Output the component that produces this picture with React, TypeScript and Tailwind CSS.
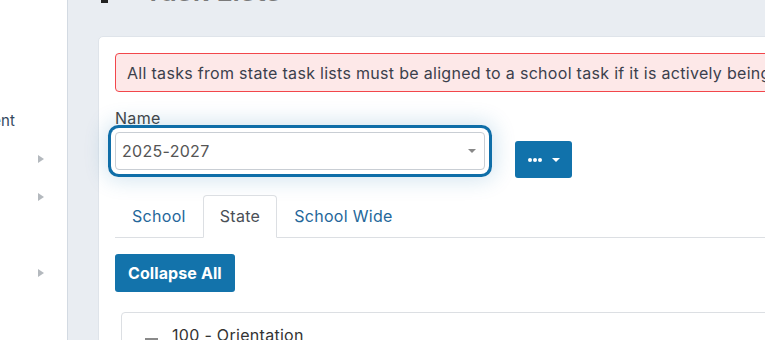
import type { ReactNode } from "react";

const font = "font-['Inter','Open_Sans',sans-serif]";

function SideArrow() {
  return (
    <svg width="6" height="8" viewBox="0 0 6 8" className="text-[#b4b9be]">
      <path d="M0 0 L6 4 L0 8 Z" fill="currentColor" />
    </svg>
  );
}

function SideRow({ children, arrow }: { children?: ReactNode; arrow?: boolean }) {
  return (
    <div className="h-[38px] flex items-center justify-end pr-[23px]">
      {children}
      {arrow && <SideArrow />}
    </div>
  );
}

function Caret({ className }: { className: string }) {
  return (
    <svg width="8" height="4" viewBox="0 0 8 4" className={className}>
      <path d="M0 0 H8 L4 4 Z" fill="currentColor" />
    </svg>
  );
}

export default function App() {
  return (
    <div className={`flex w-[765px] h-[340px] overflow-hidden tracking-[0.3px] ${font}`}>
      {/* Sidebar, scrolled so only the tail of its labels shows */}
      <aside className="w-[68px] shrink-0 bg-white border-r border-[#d3dae2] overflow-hidden pt-[102px]">
        <div className="h-[38px] flex items-center overflow-hidden">
          <span className="text-[15px] tracking-normal text-[#34495e] whitespace-nowrap ml-[-78px]">Management</span>
        </div>
        <SideRow arrow />
        <SideRow arrow />
        <SideRow />
        <SideRow arrow />
      </aside>

      <main className="flex-1 bg-[#e9edf2] pl-[30px] overflow-hidden">
        {/* Page title, scrolled mostly out of view */}
        <div className="-mt-[25px] h-[32px] flex items-start gap-[36px]">
          <span className="mt-[6px] w-[7px] h-[22px] bg-[#222] ml-[3px] shrink-0" />
          <span className="text-[28px] leading-[32px] font-semibold text-[#7a7a7a] whitespace-nowrap">
            Task Lists
          </span>
        </div>

        <div className="mt-[29px] w-[900px] h-[400px] bg-white border border-[#dfe4ea] rounded-[5px] p-[16px]">
          <div className="h-[39px] flex items-center px-[11px] bg-[#fde8e8] border border-[#f2464b] rounded-[4px] text-[16px] text-[#3b3f4c] whitespace-nowrap">
            All tasks from state task lists must be aligned to a school task if it is actively being used this year.
          </div>

          <div className="flex items-start mt-[16px]">
            <div className="flex flex-col">
              <label className="text-[16px] leading-[20px] text-[#444]">Name</label>
              <div className="mt-[4px] w-[370px] h-[38px] flex items-center justify-between pl-[6px] pr-[8px] bg-white border border-[#c9ced4] rounded-[4px] shadow-[0_0_0_4px_#fff,0_0_0_7px_#0f6ea8,0_0_22px_9px_rgba(17,112,170,0.2)]">
                <span className="text-[16px] text-[#555]">2025-2027</span>
                <Caret className="text-[#888]" />
              </div>
            </div>
            <button className="ml-[30px] mt-[33px] w-[57px] h-[37px] flex items-center justify-center gap-[10px] bg-[#1172ab] rounded-[3px]">
              <svg width="14" height="4" viewBox="0 0 14 4" className="text-white">
                <circle cx="2" cy="2" r="2" fill="currentColor" />
                <circle cx="7" cy="2" r="2" fill="currentColor" />
                <circle cx="12" cy="2" r="2" fill="currentColor" />
              </svg>
              <Caret className="text-white" />
            </button>
          </div>

          <div className="mt-[17px] flex border-b border-[#dcdfe3] text-[16px] leading-[24px]">
            <div className="px-[16px] py-[8px] border border-transparent text-[#24679a]">School</div>
            <div className="px-[16px] py-[8px] border border-[#dcdfe3] border-b-white -mb-px rounded-t-[4px] bg-white text-[#4a4f56]">
              State
            </div>
            <div className="px-[16px] py-[8px] border border-transparent text-[#24679a]">School Wide</div>
          </div>

          <button className="mt-[16px] h-[38px] px-[13px] bg-[#1373ab] rounded-[3px] text-white text-[16px] font-bold tracking-[0.1px]">
            Collapse All
          </button>

          <div className="mt-[20px] ml-[6px] border border-[#dcdfe3] rounded-[4px] px-[23px] pt-[10px]">
            <div className="flex items-center gap-[14px] text-[16px] text-[#333]">
              <span className="w-[13px] h-[2px] bg-[#8a8a8a] mt-[8px]" />
              <span>100 - Orientation</span>
            </div>
          </div>
        </div>
      </main>
    </div>
  );
}
